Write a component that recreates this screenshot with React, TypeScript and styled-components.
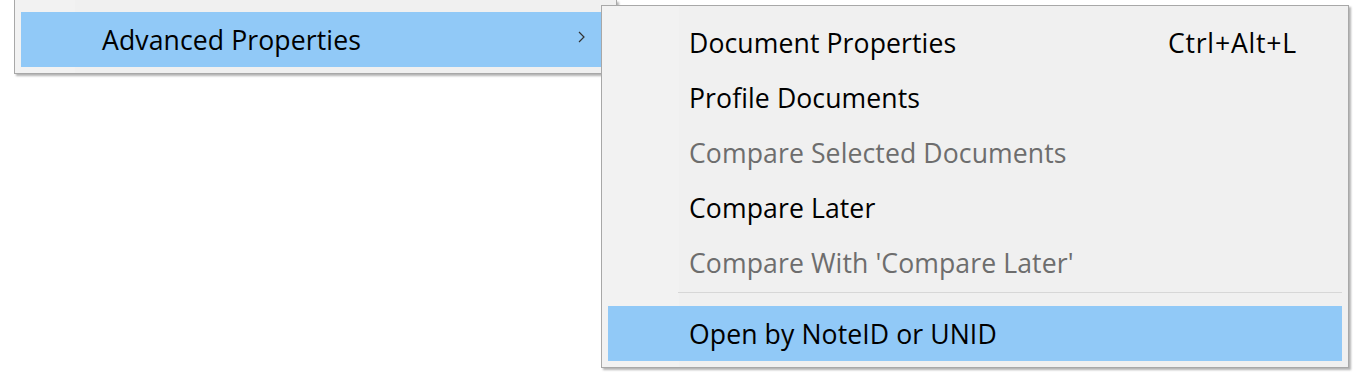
import React from "react";
import styled, { createGlobalStyle } from "styled-components";

const GlobalStyle = createGlobalStyle`
  html, body {
    margin: 0;
    padding: 0;
    background: #ffffff;
  }
  body {
    font-family: "Open Sans", "Noto Sans", "Liberation Sans", sans-serif;
  }
`;

const Stage = styled.div`
  position: relative;
  width: 1360px;
  height: 380px;
  overflow: hidden;
  background: #ffffff;
`;

const ParentMenu = styled.div`
  box-sizing: border-box;
  margin-left: 14px;
  width: 603px;
  padding: 12px 7px 6px 6px;
  background: linear-gradient(to right, #f2f2f2 60px, #f0f0f0 60px);
  border: 1px solid #a8a8a8;
  border-top: none;
  box-shadow: 2px 2px 2px rgba(0, 0, 0, 0.3);
`;

const SubMenu = styled.div`
  position: absolute;
  left: 601px;
  top: 5px;
  box-sizing: border-box;
  width: 748px;
  padding: 9px 6px 6px 6px;
  background: linear-gradient(to right, #f2f2f2 77px, #f0f0f0 77px);
  border: 1px solid #a8a8a8;
  box-shadow: 2px 2px 2px rgba(0, 0, 0, 0.3);
`;

const Item = styled.div<{ $active?: boolean; $disabled?: boolean }>`
  display: flex;
  align-items: center;
  height: 55px;
  padding-left: 81px;
  padding-right: 45px;
  font-size: 26.6px;
  letter-spacing: 0.1px;
  color: ${(p) => (p.$disabled ? "#6d6d6d" : "#000000")};
  background: ${(p) => (p.$active ? "#91c9f7" : "transparent")};
  white-space: nowrap;
`;

const Label = styled.span`
  flex: 1;
`;

const Shortcut = styled.span`
  margin-left: 40px;
  letter-spacing: 0.8px;
`;

const Arrow = styled.svg`
  width: 10px;
  height: 14px;
  margin-right: -23px;
  margin-top: -6px;
`;

const Separator = styled.div`
  height: 16px;
  margin-left: 70px;
  display: flex;
  flex-direction: column;
  &::before {
    content: "";
    margin-top: 2px;
    height: 1px;
    background: #d7d7d7;
  }
`;

type Entry =
  | { kind: "item"; label: string; shortcut?: string; disabled?: boolean; active?: boolean }
  | { kind: "sep" };

const entries: Entry[] = [
  { kind: "item", label: "Document Properties", shortcut: "Ctrl+Alt+L" },
  { kind: "item", label: "Profile Documents" },
  { kind: "item", label: "Compare Selected Documents", disabled: true },
  { kind: "item", label: "Compare Later" },
  { kind: "item", label: "Compare With 'Compare Later'", disabled: true },
  { kind: "sep" },
  { kind: "item", label: "Open by NoteID or UNID", active: true },
];

export default function App() {
  return (
    <Stage>
      <GlobalStyle />
      <ParentMenu>
        <Item $active>
          <Label>Advanced Properties</Label>
          <Arrow viewBox="0 0 10 14">
            <polyline points="2,2 7,7 2,12" fill="none" stroke="#333" strokeWidth="1.2" />
          </Arrow>
        </Item>
      </ParentMenu>
      <SubMenu>
        {entries.map((e, i) =>
          e.kind === "sep" ? (
            <Separator key={i} />
          ) : (
            <Item key={i} $active={e.active} $disabled={e.disabled}>
              <Label>{e.label}</Label>
              {e.shortcut && <Shortcut>{e.shortcut}</Shortcut>}
            </Item>
          )
        )}
      </SubMenu>
    </Stage>
  );
}
